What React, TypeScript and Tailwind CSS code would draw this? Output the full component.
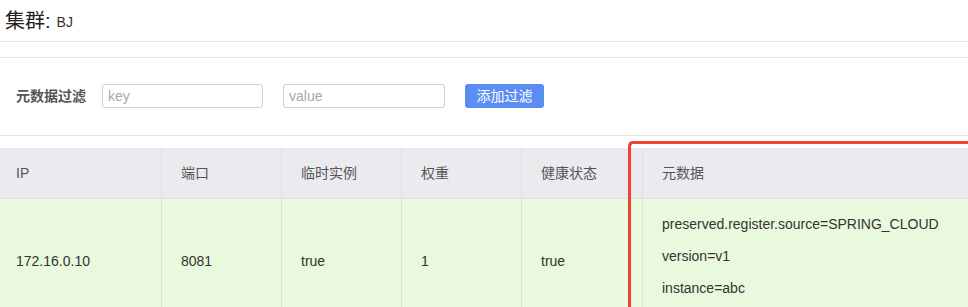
const COLUMNS = ["IP", "端口", "临时实例", "权重", "健康状态", "元数据"];

const METADATA = [
  "preserved.register.source=SPRING_CLOUD",
  "version=v1",
  "instance=abc",
];

export default function App() {
  return (
    <div
      className="relative h-[307px] w-[968px] overflow-hidden bg-white text-[#333]"
      style={{ fontFamily: '"Liberation Sans", "Noto Sans CJK SC", sans-serif' }}
    >
      {/* Title */}
      <div className="flex h-[42px] items-center border-b border-[#e3e3e3] pl-[5px] pt-[1px]">
        <span className="text-[20px] text-[#222]">集群:</span>
        <span className="ml-[6px] pt-[2px] text-[14px] text-[#333]">BJ</span>
      </div>

      {/* Filter */}
      <div className="mt-[15px] flex h-[79px] items-center border-y border-[#e3e3e3] pl-[16px] pb-[1px]">
        <span className="text-[14px] font-bold text-[#555]">元数据过滤</span>
        <input
          placeholder="key"
          className="ml-[16px] h-[24px] w-[161px] rounded-[3px] border border-[#cfcfcf] px-[5px] text-[14px] outline-none placeholder:text-[#a8a8a8]"
        />
        <input
          placeholder="value"
          className="ml-[20px] h-[24px] w-[162px] rounded-[3px] border border-[#cfcfcf] px-[5px] text-[14px] outline-none placeholder:text-[#a8a8a8]"
        />
        <button className="ml-[20px] h-[24px] w-[79px] rounded-[3px] bg-[#5b8ef2] text-[14px] text-white">
          添加过滤
        </button>
      </div>

      {/* Table */}
      <div className="mt-[12px] grid grid-cols-[162px_120px_120px_120px_121px_1fr]">
        {COLUMNS.map((c, i) => (
          <div
            key={c}
            className={`flex h-[51px] items-center border-b border-[#dde1e4] bg-[#ebebef] pt-[1px] text-[14px] text-[#555] ${
              i === 0 ? "pl-[16px]" : "pl-[19px]"
            } ${i < COLUMNS.length - 1 ? "border-r" : ""}`}
          >
            {c}
          </div>
        ))}
        {["172.16.0.10", "8081", "true", "1", "true"].map((v, i) => (
          <div
            key={i}
            className={`flex h-[126px] items-center border-r border-[#dde1e4] bg-[#e9f9de] pb-[1px] text-[14px] text-[#333] ${
              i === 0 ? "pl-[16px]" : "pl-[19px]"
            }`}
          >
            {v}
          </div>
        ))}
        <div className="flex h-[126px] flex-col gap-[14px] bg-[#e9f9de] pl-[19px] pt-[16px] text-[14px] leading-[18px] text-[#333]">
          {METADATA.map((m) => (
            <div key={m}>{m}</div>
          ))}
        </div>
      </div>

      {/* annotation, runs off the right and bottom edges */}
      <div className="absolute left-[628px] right-0 top-[141px] h-[200px] rounded-tl-[5px] border-l-[3px] border-t-[3px] border-[#ee4330]" />
    </div>
  );
}
